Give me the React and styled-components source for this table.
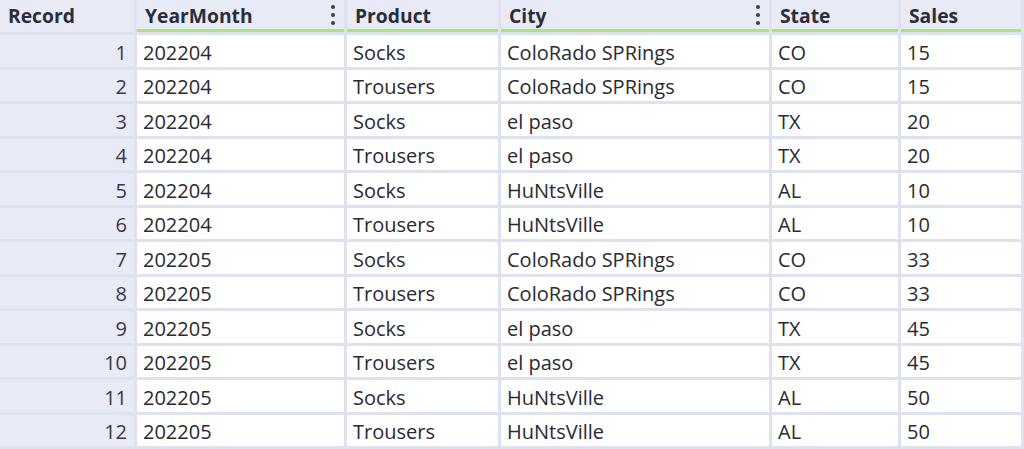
import React from "react";
import styled, { createGlobalStyle } from "styled-components";

const Global = createGlobalStyle`
  html, body {
    margin: 0;
    padding: 0;
    background: #ffffff;
  }
  body {
    font-family: "Open Sans", "Noto Sans", "Liberation Sans", sans-serif;
  }
`;

const Grid = styled.div`
  display: grid;
  grid-template-columns: 134px 207px 151px 268px 126px 120px;
  grid-template-rows: 32px repeat(12, 31.5px);
  gap: 3px;
  width: 1024px;
  height: 449px;
  padding-right: 3px;
  box-sizing: border-box;
  background: #dde2ee;
`;

const HeadCell = styled.div`
  display: flex;
  align-items: center;
  justify-content: space-between;
  padding: 1px 6px 0 8px;
  background: #e8ebf5;
  font-size: 19.3px;
  font-weight: 700;
  color: #2b2d3a;
  white-space: nowrap;
  box-sizing: border-box;
  border-bottom: 3px solid ${(p) => (p.$accent ? "#a8e67d" : "#e8ebf5")};
`;

const Dots = styled.span`
  display: flex;
  flex-direction: column;
  gap: 4px;
  margin: 0 3px 0 0;

  & > i {
    width: 4px;
    height: 4px;
    border-radius: 50%;
    background: #3a3d4a;
  }
`;

const RecordCell = styled.div`
  display: flex;
  align-items: center;
  justify-content: flex-end;
  padding: 3px 7px 0 0;
  background: #e8ebf5;
  font-size: 20px;
  color: #3b3650;
`;

const Cell = styled.div`
  display: flex;
  align-items: center;
  padding: 3px 0 0 6px;
  background: #ffffff;
  font-size: 20px;
  color: #2a2a33;
  white-space: nowrap;
  overflow: hidden;
`;

const columns = [
  { name: "Record" },
  { name: "YearMonth", accent: true, menu: true },
  { name: "Product", accent: true },
  { name: "City", accent: true, menu: true },
  { name: "State", accent: true },
  { name: "Sales", accent: true },
];

const rows = [
  ["202204", "Socks", "ColoRado SPRings", "CO", "15"],
  ["202204", "Trousers", "ColoRado SPRings", "CO", "15"],
  ["202204", "Socks", "el paso", "TX", "20"],
  ["202204", "Trousers", "el paso", "TX", "20"],
  ["202204", "Socks", "HuNtsVille", "AL", "10"],
  ["202204", "Trousers", "HuNtsVille", "AL", "10"],
  ["202205", "Socks", "ColoRado SPRings", "CO", "33"],
  ["202205", "Trousers", "ColoRado SPRings", "CO", "33"],
  ["202205", "Socks", "el paso", "TX", "45"],
  ["202205", "Trousers", "el paso", "TX", "45"],
  ["202205", "Socks", "HuNtsVille", "AL", "50"],
  ["202205", "Trousers", "HuNtsVille", "AL", "50"],
];

export default function App() {
  return (
    <>
      <Global />
      <Grid>
        {columns.map((c) => (
          <HeadCell key={c.name} $accent={c.accent}>
            <span>{c.name}</span>
            {c.menu && (
              <Dots>
                <i />
                <i />
                <i />
              </Dots>
            )}
          </HeadCell>
        ))}
        {rows.map((r, i) => (
          <React.Fragment key={i}>
            <RecordCell>{i + 1}</RecordCell>
            {r.map((v, j) => (
              <Cell key={j}>{v}</Cell>
            ))}
          </React.Fragment>
        ))}
      </Grid>
    </>
  );
}
